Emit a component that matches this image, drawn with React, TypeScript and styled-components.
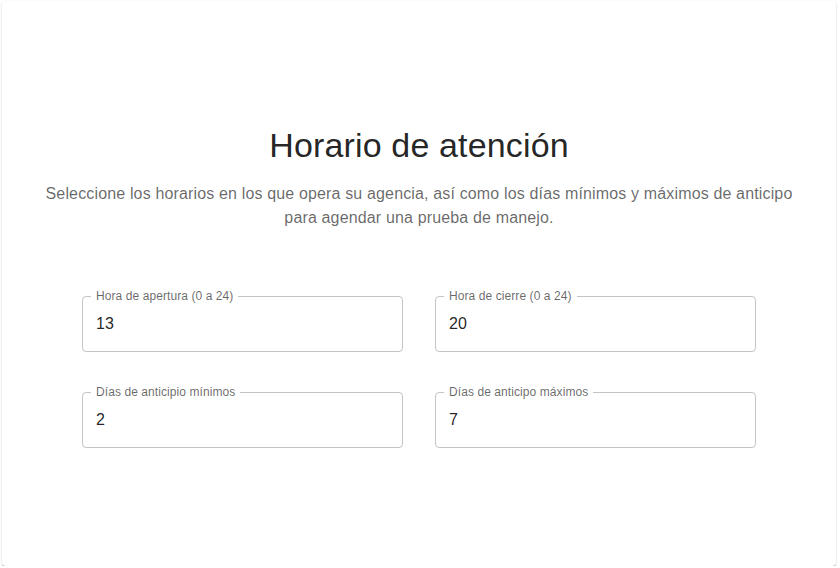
import React from "react";
import styled, { createGlobalStyle } from "styled-components";

const GlobalStyle = createGlobalStyle`
  html, body {
    margin: 0;
    padding: 0;
    background: #ffffff;
  }
  body {
    font-family: "Liberation Sans", Arial, Helvetica, sans-serif;
  }
  * { box-sizing: border-box; }
`;

const Page = styled.div`
  padding: 1px 4px 0 2px;
`;

const Card = styled.section`
  width: 834px;
  height: 565px;
  background: #ffffff;
  border-radius: 4px;
  box-shadow: 0px 2px 1px -1px rgba(0, 0, 0, 0.2),
    0px 1px 1px 0px rgba(0, 0, 0, 0.14), 0px 1px 3px 0px rgba(0, 0, 0, 0.12);
  padding: 122.5px 32px 0;
  display: flex;
  flex-direction: column;
  align-items: center;
`;

const Title = styled.h1`
  margin: 0 0 16px;
  font-size: 34px;
  line-height: 42px;
  font-weight: 400;
  letter-spacing: 0.15px;
  color: rgba(0, 0, 0, 0.87);
  text-align: center;
`;

const Subtitle = styled.p`
  margin: 0;
  max-width: 770px;
  font-size: 16px;
  line-height: 24px;
  letter-spacing: 0.15px;
  color: rgba(0, 0, 0, 0.6);
  text-align: center;
`;

const FieldsGrid = styled.div`
  margin-top: 66px;
  width: 674px;
  display: grid;
  grid-template-columns: 1fr 1fr;
  column-gap: 32px;
  row-gap: 40px;
`;

const Field = styled.div`
  position: relative;
`;

const InputRoot = styled.div`
  height: 56px;
  border: 1px solid rgba(0, 0, 0, 0.23);
  border-radius: 4px;
  display: flex;
  align-items: flex-start;
`;

const Input = styled.input`
  width: 100%;
  border: 0;
  outline: none;
  background: transparent;
  padding: 15.5px 13px;
  height: 54px;
  font-family: "Liberation Sans", Arial, Helvetica, sans-serif;
  font-size: 16px;
  line-height: 23px;
  color: rgba(0, 0, 0, 0.87);
`;

const Label = styled.label`
  position: absolute;
  left: 9px;
  top: -6px;
  padding: 0 5px;
  background: #ffffff;
  font-size: 12px;
  line-height: 12px;
  letter-spacing: 0.08px;
  color: rgba(0, 0, 0, 0.6);
  white-space: nowrap;
`;

type FieldData = { id: string; label: string; value: string };

const fields: FieldData[] = [
  { id: "apertura", label: "Hora de apertura (0 a 24)", value: "13" },
  { id: "cierre", label: "Hora de cierre (0 a 24)", value: "20" },
  { id: "minimos", label: "Días de anticipio mínimos", value: "2" },
  { id: "maximos", label: "Días de anticipo máximos", value: "7" },
];

function OutlinedField({ id, label, value }: FieldData) {
  const [v, setV] = React.useState(value);
  return (
    <Field>
      <InputRoot>
        <Input id={id} value={v} onChange={(e) => setV(e.target.value)} />
      </InputRoot>
      <Label htmlFor={id}>{label}</Label>
    </Field>
  );
}

export default function App() {
  return (
    <>
      <GlobalStyle />
      <Page>
        <Card>
          <Title>Horario de atención</Title>
          <Subtitle>
            Seleccione los horarios en los que opera su agencia, así como los
            días mínimos y máximos de anticipo para agendar una prueba de
            manejo.
          </Subtitle>
          <FieldsGrid>
            {fields.map((f) => (
              <OutlinedField key={f.id} {...f} />
            ))}
          </FieldsGrid>
        </Card>
      </Page>
    </>
  );
}
